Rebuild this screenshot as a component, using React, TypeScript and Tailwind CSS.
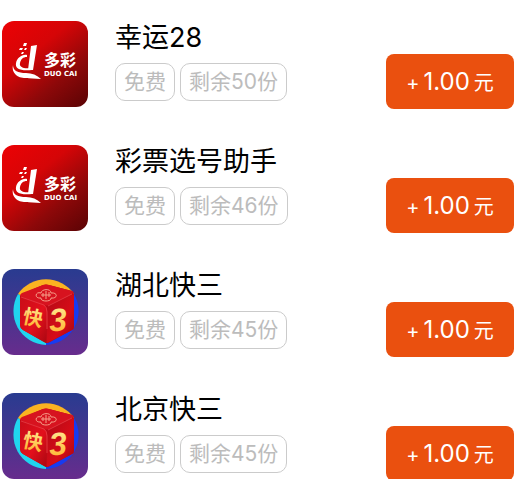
import { useId } from 'react';

type Logo = 'duocai' | 'kuai3';

interface Task {
  id: number;
  name: string;
  logo: Logo;
  left: number;
  reward: string;
}

const tasks: Task[] = [
  { id: 1, name: '幸运28', logo: 'duocai', left: 50, reward: '1.00' },
  { id: 2, name: '彩票选号助手', logo: 'duocai', left: 46, reward: '1.00' },
  { id: 3, name: '湖北快三', logo: 'kuai3', left: 45, reward: '1.00' },
  { id: 4, name: '北京快三', logo: 'kuai3', left: 45, reward: '1.00' },
];

const DuoCaiLogo = () => {
  const id = useId();
  return (
    <svg viewBox="0 0 86 86" className="block h-full w-full" aria-hidden="true">
      <defs>
        <linearGradient id={id} x1="0.1" y1="0" x2="0.9" y2="1">
          <stop offset="0" stopColor="#e90205" />
          <stop offset="0.35" stopColor="#d50507" />
          <stop offset="0.7" stopColor="#8d0809" />
          <stop offset="1" stopColor="#610405" />
        </linearGradient>
      </defs>
      <rect width="86" height="86" fill={`url(#${id})`} />
      {/* Mark */}
      <g fill="#fff">
        <path d="M29 25 L35 24 L31 49 L26 49 Z" />
        <path d="M25 34 C20 33 15 37 14 42 C13 48 18 50 30 49 L30 47 C21 48 17 46 18 42 C19 38 21 36 25 36 Z" />
        <path d="M11 44 C11 50 16 52 24 52 C30 52 35 54 39 58 C27 57 18 58 14 54 C11 51 10 48 11 44 Z" />
        <path d="M22 22h3l-1 3h-3z M18 27h3l-1 2h-3z M23 27h2l-1 2h-2z M20 31h2l-1 2h-2z" />
      </g>
      <text x="42" y="45" fontSize="16" className="fill-white font-['Noto_Sans_CJK_SC',sans-serif] font-bold">
        多彩
      </text>
      <text x="42" y="55" fontSize="7" className="fill-white font-['DejaVu_Sans',sans-serif] font-bold">
        DUO CAI
      </text>
    </svg>
  );
};

const Kuai3Logo = () => {
  const id = useId();
  return (
    <svg viewBox="0 0 86 86" className="block h-full w-full" aria-hidden="true">
      <defs>
        <linearGradient id={`${id}bg`} x1="0" y1="0" x2="0" y2="1">
          <stop offset="0" stopColor="#293b90" />
          <stop offset="0.5" stopColor="#46358e" />
          <stop offset="1" stopColor="#672c8d" />
        </linearGradient>
        <linearGradient id={`${id}left`} x1="0" y1="0" x2="1" y2="1">
          <stop offset="0" stopColor="#c90d18" />
          <stop offset="0.55" stopColor="#e3101c" />
          <stop offset="1" stopColor="#a90711" />
        </linearGradient>
        <linearGradient id={`${id}right`} x1="0" y1="0" x2="1" y2="1">
          <stop offset="0" stopColor="#b40a15" />
          <stop offset="0.6" stopColor="#d60c18" />
          <stop offset="1" stopColor="#a10610" />
        </linearGradient>
        <linearGradient id={`${id}gold`} x1="0" y1="0" x2="0" y2="1">
          <stop offset="0" stopColor="#fff0a0" />
          <stop offset="1" stopColor="#ffad22" />
        </linearGradient>
      </defs>
      <rect width="86" height="86" fill={`url(#${id}bg)`} />
      {/* Ring behind the dice */}
      <path d="M44 43 L16 25 A34 34 0 0 1 72 25 Z" fill="#fbb321" />
      <path d="M44 43 L44 76 A34 34 0 0 1 16 25 Z" fill="#20d5ee" />
      <path d="M44 43 L72 25 A34 34 0 0 1 44 76 Z" fill="#173bf0" />
      {/* Dice */}
      <path d="M18 27 Q30 20 41 16 Q44 15 47 16 L70 22 Q72 23 72 26 L72 57 Q72 60 70 61 L48 73 Q45 75 42 73 L21 61 Q18 59 18 56 Z" fill="#bd0a16" />
      <path d="M18 27 Q18 25 20 24 L41 16 Q44 15 47 16 L70 22 Q73 23 70 25 L47 36 Q45 37 42 36 Z" fill="#d7131f" />
      <path d="M18 28 L42 36 Q45 38 45 41 L44 74 L21 61 Q18 59 18 56 Z" fill={`url(#${id}left)`} />
      <path d="M47 37 L72 25 L72 57 Q72 60 70 61 L45 74 L45 41 Z" fill={`url(#${id}right)`} />
      <path d="M19 28 L42 36 Q45 38 45 43 L45 60 M46 37 L70 25" fill="none" stroke="#f0474f" strokeWidth="1" opacity="0.7" />
      <path
        d="M39 24 C33 22 32 30 39 29 C38 33 50 33 49 29 C56 30 56 23 49 24 C49 19 39 20 39 24 Z M39 26 H49 M41 24 V28 M47 23 V28 M44 22 V30"
        fill="none"
        stroke="#f6a08a"
        strokeWidth="1"
      />
      <text
        x="21"
        y="56"
        fontSize="20"
        transform="rotate(12 31 49)"
        fill={`url(#${id}gold)`}
        className="font-['Noto_Sans_CJK_SC',sans-serif] font-bold"
      >
        快
      </text>
      <text
        x="47"
        y="62"
        fontSize="32"
        transform="rotate(-4 56 51)"
        fill={`url(#${id}gold)`}
        className="font-['Liberation_Sans',sans-serif] font-bold italic"
      >
        3
      </text>
    </svg>
  );
};

const Tag = ({ children }: { children: React.ReactNode }) => (
  <span className="flex h-[38px] items-center rounded-[10px] border border-[#cbcbcb] px-2 text-[21px] leading-6 font-normal whitespace-nowrap text-[#bcbcbc]">
    {children}
  </span>
);

const TaskRow = ({ task }: { task: Task }) => (
  <li className="flex h-[86px] items-start">
    <div className="h-[86px] w-[86px] shrink-0 overflow-hidden rounded-xl">
      {task.logo === 'duocai' ? <DuoCaiLogo /> : <Kuai3Logo />}
    </div>
    <div className="ml-[27px] min-w-0 flex-1">
      <h2 className="h-[42px] text-[27px] leading-[34px] font-normal whitespace-nowrap text-black">{task.name}</h2>
      <div className="flex gap-[5px]">
        <Tag>免费</Tag>
        <Tag>剩余{task.left}份</Tag>
      </div>
    </div>
    <button
      type="button"
      className="mt-[33px] flex h-[55px] w-32 shrink-0 items-center justify-center rounded-lg bg-[#ea500f] pt-0.5 text-white"
    >
      <span className="flex items-baseline gap-1 leading-8">
        <span className="text-[20px]">+</span>
        <span className="text-[24px]">{task.reward}</span>
        <span className="text-[20px]">元</span>
      </span>
    </button>
  </li>
);

export default function App() {
  return (
    <main className="bg-white pt-[21px] pr-4 pb-1 pl-0.5 font-['Inter','Noto_Sans_CJK_SC',sans-serif]">
      <ul className="flex flex-col gap-[38px] overflow-hidden">
        {tasks.map((task) => (
          <TaskRow key={task.id} task={task} />
        ))}
      </ul>
    </main>
  );
}
